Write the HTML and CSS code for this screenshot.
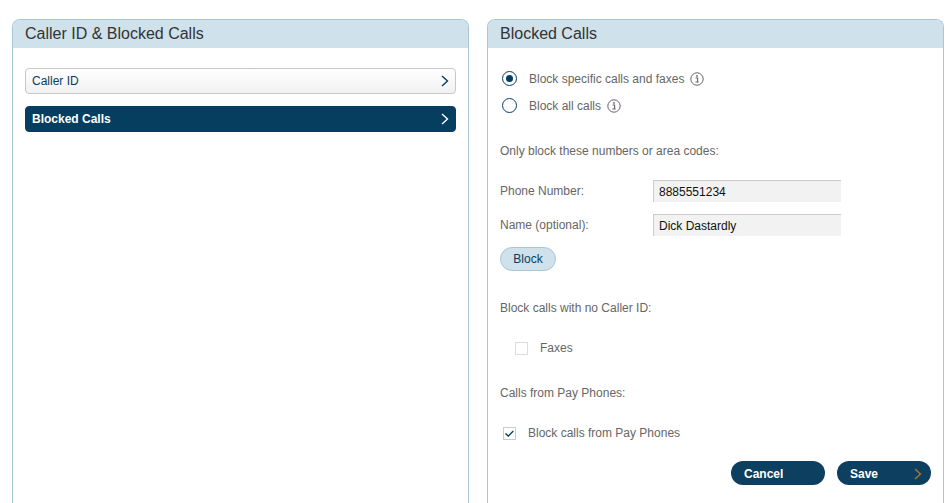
FILE: index.html
```html
<!DOCTYPE html>
<html lang="en">
<head>
    <meta charset="UTF-8">
    <title>Blocked Calls</title>
    <link rel="stylesheet" href="styles.css">
</head>
<body>
    <div class="page">
        <div class="panel">
            <h2 class="panel-title">Caller ID &amp; Blocked Calls</h2>
            <div class="menu">
                <a class="menu-item">Caller ID
                    <svg class="chevron" width="8" height="12" viewBox="0 0 8 12"><path d="M1 1l5.5 5-5.5 5" fill="none" stroke="#063e5f" stroke-width="1.4"/></svg>
                </a>
                <a class="menu-item active">Blocked Calls
                    <svg class="chevron" width="8" height="12" viewBox="0 0 8 12"><path d="M1 1l5.5 5-5.5 5" fill="none" stroke="#fff" stroke-width="1.4"/></svg>
                </a>
            </div>
        </div>

        <div class="panel">
            <h2 class="panel-title">Blocked Calls</h2>
            <div class="form">
                <div class="radio-row">
                    <span class="radio checked"></span>
                    <span>Block specific calls and faxes</span>
                    <svg class="info" width="14" height="14" viewBox="0 0 14 14"><circle cx="7" cy="7" r="6.2" fill="none" stroke="#6b5f6b"/><path d="M5.6 6h2v3.8M5.4 10h3.3" fill="none" stroke="#6b5f6b" stroke-width="1.1"/><circle cx="7" cy="3.9" r="0.9" fill="#6b5f6b"/></svg>
                </div>
                <div class="radio-row">
                    <span class="radio"></span>
                    <span>Block all calls</span>
                    <svg class="info" width="14" height="14" viewBox="0 0 14 14"><circle cx="7" cy="7" r="6.2" fill="none" stroke="#6b5f6b"/><path d="M5.6 6h2v3.8M5.4 10h3.3" fill="none" stroke="#6b5f6b" stroke-width="1.1"/><circle cx="7" cy="3.9" r="0.9" fill="#6b5f6b"/></svg>
                </div>

                <p class="section only-block">Only block these numbers or area codes:</p>

                <div class="field first">
                    <label>Phone Number:</label>
                    <input class="text-input" type="text" value="8885551234">
                </div>
                <div class="field">
                    <label>Name (optional):</label>
                    <input class="text-input" type="text" value="Dick Dastardly">
                </div>
                <button class="block-btn">Block</button>

                <p class="section no-caller">Block calls with no Caller ID:</p>
                <div class="check-row faxes">
                    <span class="check"></span>
                    <span>Faxes</span>
                </div>

                <p class="section pay-phones">Calls from Pay Phones:</p>
                <div class="check-row pay">
                    <span class="check">
                        <svg width="13" height="13" viewBox="0 0 13 13"><path d="M2.5 6.5l2.8 2.6 5-5" fill="none" stroke="#063e5f" stroke-width="1.4"/></svg>
                    </span>
                    <span>Block calls from Pay Phones</span>
                </div>

                <div class="actions">
                    <button class="btn">Cancel</button>
                    <button class="btn">Save
                        <svg class="chevron" width="8" height="12" viewBox="0 0 8 12"><path d="M1 1l5.5 5-5.5 5" fill="none" stroke="#b07a2e" stroke-width="1.3"/></svg>
                    </button>
                </div>
            </div>
        </div>
    </div>
</body>
</html>
```

FILE: styles.css
```css
html, body {
    height: 100%;
}
body {
    margin: 0;
    overflow: hidden;
    background-color: #fff;
    font-family: "Liberation Sans", Arial, sans-serif;
    font-size: 12px;
    color: #666;
}
.page {
    display: flex;
    gap: 18px;
    height: 100%;
    box-sizing: border-box;
    padding: 19px 7px 0 12px;
}
.panel {
    width: 457px;
    box-sizing: border-box;
    flex-shrink: 0;
    border: 1px solid #a9c6d6;
    border-bottom: 0;
    border-radius: 8px 8px 0 0;
}
.panel-title {
    margin: 0;
    height: 28px;
    padding-left: 12px;
    background-color: #cfe1eb;
    border-radius: 7px 7px 0 0;
    font-size: 16px;
    font-weight: normal;
    line-height: 27px;
    color: #333;
}
.menu {
    display: flex;
    flex-direction: column;
    gap: 12px;
    padding: 20px 12px 0;
}
.menu-item {
    display: flex;
    align-items: center;
    justify-content: space-between;
    height: 26px;
    box-sizing: border-box;
    padding: 0 6px;
    border: 1px solid #c8c8c8;
    border-radius: 4px;
    background: linear-gradient(#fff, #f1f1f1);
    color: #063e5f;
}
.menu-item.active {
    background: #063e5f;
    border-color: #063e5f;
    color: #fff;
    font-weight: bold;
}
.form {
    padding: 0 12px;
}
.radio-row {
    display: flex;
    align-items: center;
    height: 27px;
}
.radio-row:first-child {
    margin-top: 17px;
}
.radio {
    width: 15px;
    height: 15px;
    box-sizing: border-box;
    margin: 0 12px 0 2px;
    border: 1px solid #063e5f;
    border-radius: 50%;
    display: flex;
    align-items: center;
    justify-content: center;
}
.radio.checked::after {
    content: "";
    width: 7px;
    height: 7px;
    border-radius: 50%;
    background-color: #063e5f;
}
.info {
    margin-left: 6px;
}
.section {
    margin: 0;
    line-height: 14px;
}
.only-block {
    margin-top: 25px;
}
.field {
    display: flex;
    align-items: center;
    height: 22px;
    margin-top: 12px;
}
.field.first {
    margin-top: 22px;
}
.field label {
    width: 153px;
}
.text-input {
    width: 188px;
    height: 22px;
    box-sizing: border-box;
    padding: 1px 0 0 5px;
    border: 0;
    border-top: 1px solid #ccc;
    border-left: 1px solid #ccc;
    background-color: #f2f2f2;
    font-family: inherit;
    font-size: 12px;
    color: #111;
    outline: none;
}
.block-btn {
    display: block;
    width: 56px;
    height: 24px;
    margin-top: 11px;
    padding: 0;
    border: 1px solid #a9c6d6;
    border-radius: 12px;
    background-color: #cfe1eb;
    font-family: inherit;
    font-size: 12px;
    color: #063e5f;
}
.no-caller {
    margin-top: 30px;
}
.check-row {
    display: flex;
    align-items: center;
    height: 14px;
}
.check {
    display: block;
    width: 13px;
    height: 13px;
    box-sizing: border-box;
    border: 1px solid #ddd;
    background-color: #fff;
}
.check svg {
    display: block;
    margin: -1px;
}
.faxes {
    margin-top: 26px;
    padding-left: 15px;
}
.faxes .check {
    margin-right: 12px;
}
.pay-phones {
    margin-top: 31px;
}
.pay {
    margin-top: 26px;
    padding-left: 3px;
}
.pay .check {
    margin-right: 12px;
    border-color: #ccc;
}
.actions {
    display: flex;
    justify-content: flex-end;
    gap: 12px;
    margin-top: 21px;
}
.btn {
    display: flex;
    align-items: center;
    justify-content: space-between;
    width: 94px;
    height: 24px;
    padding: 1px 9px 0 13px;
    border: 0;
    border-radius: 12px;
    background-color: #0d3f60;
    font-family: inherit;
    font-size: 12px;
    font-weight: bold;
    color: #fff;
}
```
